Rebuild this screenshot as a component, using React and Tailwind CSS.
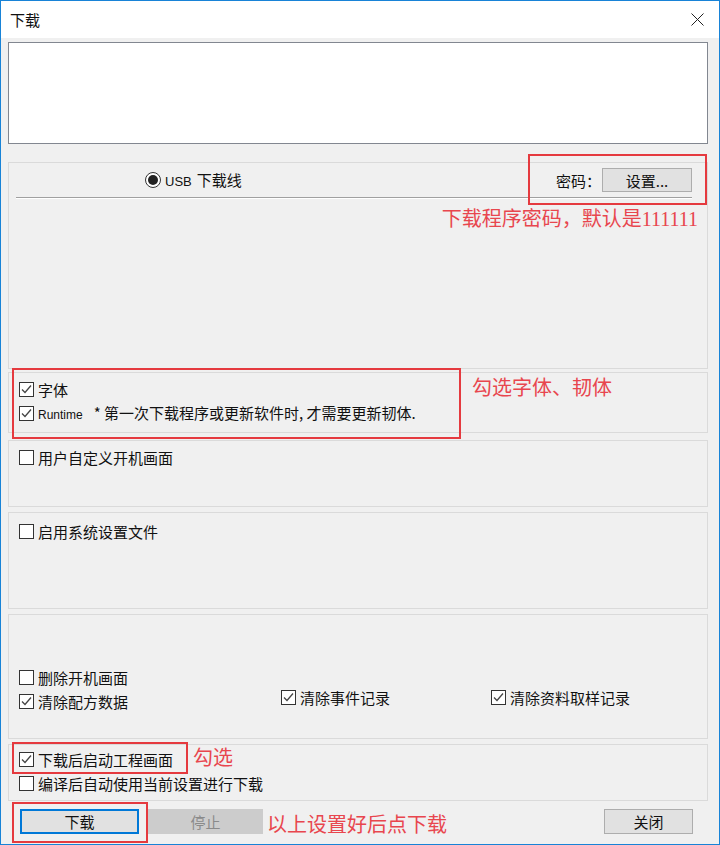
const cjk = { fontFamily: '"Noto Sans CJK SC", "Noto Sans", sans-serif' };
const red = { fontFamily: '"Liberation Serif", "Noto Sans CJK SC", serif' };
const latin = { fontFamily: '"Liberation Sans", "Noto Sans CJK SC", sans-serif' };

function Check({ checked, label, small, rest }) {
  return (
    <div className="flex h-6 items-center">
      <div className="flex h-[15px] w-[15px] shrink-0 items-center justify-center border border-[#333] bg-white">
        {checked && (
          <svg width="13" height="13" viewBox="0 0 13 13">
            <polyline points="2,6.5 5,9.5 11,2.5" fill="none" stroke="#444" strokeWidth="1.3" />
          </svg>
        )}
      </div>
      <span className="ml-[4px] text-[15px]">
        {small ? (
          <>
            <span className="text-[12px]" style={latin}>{label}</span>
            <span className="ml-[11px]">{rest}</span>
          </>
        ) : (
          label
        )}
      </span>
    </div>
  );
}

function Panel({ className, children }) {
  return (
    <div className={"relative w-[700px] border border-[#dadada] " + className}>
      {children}
    </div>
  );
}

export default function App() {
  return (
    <div className="flex h-[845px] w-[720px] flex-col overflow-hidden border border-[#1883d7] bg-[#f0f0f0] leading-none text-[#111]" style={cjk}>
      {/* title bar */}
      <div className="flex h-[37px] shrink-0 items-center justify-between bg-white pl-[9px] pr-[15px]">
        <span className="text-[15px]">下载</span>
        <svg width="13" height="13" viewBox="0 0 13 13">
          <path d="M0.5 0.5 L12.5 12.5 M12.5 0.5 L0.5 12.5" stroke="#222" strokeWidth="1" />
        </svg>
      </div>

      <div className="flex flex-col px-[7px]">
        <div className="mt-[4px] h-[102px] w-[700px] border border-[#828790] bg-white" />

        {/* connection / password */}
        <Panel className="mt-[18px] h-[207px]">
          <div className="flex h-[34px] items-center">
            <div className="ml-[136px] flex items-center">
              <div className="flex h-[16px] w-[16px] shrink-0 items-center justify-center rounded-full border border-[#333] bg-white">
                <div className="h-[10px] w-[10px] rounded-full bg-[#222]" />
              </div>
              <span className="ml-[4px] text-[15px]">
                <span className="text-[13px]" style={latin}>USB</span>
                <span className="ml-[5px]">下载线</span>
              </span>
            </div>
            <div className="ml-auto mr-[15px] flex items-center">
              <span className="text-[15px]">密码：</span>
              <button className="ml-[1px] h-[24px] w-[90px] border border-[#adadad] bg-[#e1e1e1] text-[15px]">设置...</button>
            </div>
          </div>
          <div className="ml-[7px] mr-[15px] h-[2px] border-b border-t border-b-white border-t-[#a0a0a0]" />
          <div className="mt-[10px] flex justify-end pr-[9px] text-[20px] text-[#e8464e]" style={red}>
            下载程序密码，默认是111111
          </div>
          <div className="absolute left-[519px] top-[-9px] h-[51px] w-[179px] border-2 border-[#e53a3f]" />
        </Panel>

        {/* font / runtime */}
        <Panel className="mt-[3px] h-[61px] pl-[10px] pt-[4px]">
          <Check checked label="字体" />
          <Check checked small label="Runtime" rest="* 第一次下载程序或更新软件时, 才需要更新韧体." />
          <div className="absolute left-[3px] top-[-5px] h-[71px] w-[449px] border-2 border-[#e53a3f]" />
          <span className="absolute left-[463px] top-[5px] text-[20px] text-[#e8464e]" style={red}>勾选字体、韧体</span>
        </Panel>

        <Panel className="mt-[7px] h-[67px] pl-[10px] pt-[4px]">
          <Check label="用户自定义开机画面" />
        </Panel>

        <Panel className="mt-[5px] h-[97px] pl-[10px] pt-[6px]">
          <Check label="启用系统设置文件" />
        </Panel>

        <Panel className="mt-[5px] h-[125px] pl-[10px] pt-[50px]">
          <Check label="删除开机画面" />
          <div className="-mt-1 flex items-start">
            <div className="mt-1 w-[262px]">
              <Check checked label="清除配方数据" />
            </div>
            <div className="w-[210px]">
              <Check checked label="清除事件记录" />
            </div>
            <Check checked label="清除资料取样记录" />
          </div>
        </Panel>

        <Panel className="mt-[5px] h-[57px] pl-[10px] pt-[2px]">
          <Check checked label="下载后启动工程画面" />
          <Check label="编译后自动使用当前设置进行下载" />
          <div className="absolute left-[3px] top-[-3px] h-[32px] w-[176px] border-2 border-[#e53a3f]" />
          <span className="absolute left-[184px] top-[3px] text-[20px] text-[#e8464e]" style={red}>勾选</span>
        </Panel>

        {/* buttons */}
        <div className="mt-[8px] flex h-[25px] items-center">
          <div className="relative ml-[12px]">
            <button className="h-[25px] w-[119px] border-2 border-[#0078d7] bg-[#e1e1e1] text-[15px]">下载</button>
            <div className="absolute left-[-8px] top-[-7px] h-[41px] w-[136px] border-2 border-[#e53a3f]" />
          </div>
          <button className="ml-[9px] h-[25px] w-[115px] border border-[#cccccc] bg-[#cccccc] text-[15px] text-[#8a8a8a]">停止</button>
          <span className="ml-[4px] mt-[6px] text-[20px] text-[#e8464e]" style={red}>以上设置好后点下载</span>
          <button className="ml-auto mr-[19px] h-[25px] w-[89px] border border-[#adadad] bg-[#e1e1e1] text-[15px]">关闭</button>
        </div>
      </div>
    </div>
  );
}
